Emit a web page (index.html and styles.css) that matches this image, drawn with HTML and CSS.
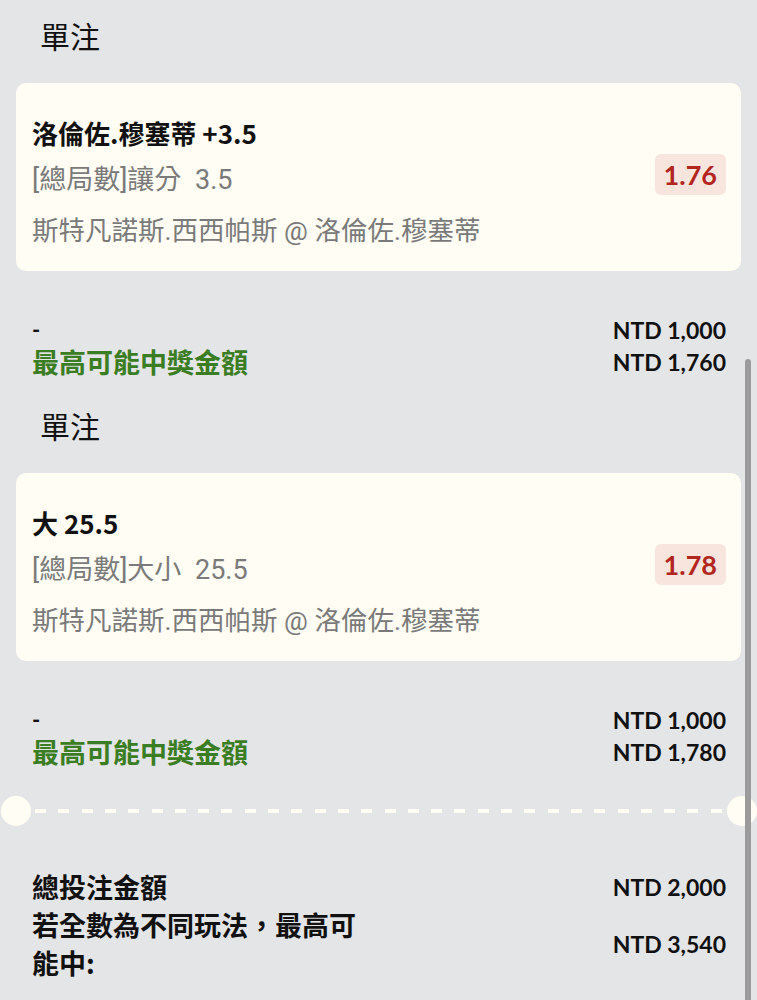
FILE: index.html
```html
<!DOCTYPE html>
<html lang="zh-Hant">
<head>
<meta charset="utf-8">
<title>單注</title>
<link rel="stylesheet" href="styles.css">
</head>
<body>
<div class="page">
  <section class="bet">
    <h2 class="bet-title">單注</h2>
    <div class="card">
      <div class="card-info">
        <div class="pick">洛倫佐.穆塞蒂 +3.5</div>
        <div class="market">[總局數]讓分 3.5</div>
        <div class="match">斯特凡諾斯.西西帕斯 @ 洛倫佐.穆塞蒂</div>
      </div>
      <div class="odds">1.76</div>
    </div>
    <div class="amounts">
      <div class="amount-labels">
        <div class="dash">-</div>
        <div class="win-label">最高可能中獎金額</div>
      </div>
      <div class="amount-values">
        <div>NTD 1,000</div>
        <div>NTD 1,760</div>
      </div>
    </div>
  </section>

  <section class="bet">
    <h2 class="bet-title">單注</h2>
    <div class="card">
      <div class="card-info">
        <div class="pick">大 25.5</div>
        <div class="market">[總局數]大小 25.5</div>
        <div class="match">斯特凡諾斯.西西帕斯 @ 洛倫佐.穆塞蒂</div>
      </div>
      <div class="odds">1.78</div>
    </div>
    <div class="amounts">
      <div class="amount-labels">
        <div class="dash">-</div>
        <div class="win-label">最高可能中獎金額</div>
      </div>
      <div class="amount-values">
        <div>NTD 1,000</div>
        <div>NTD 1,780</div>
      </div>
    </div>
  </section>
</div>

<div class="separator">
  <span class="notch"></span>
  <span class="dashed"></span>
  <span class="notch"></span>
</div>

<div class="summary">
  <div class="summary-row">
    <div class="summary-label">總投注金額</div>
    <div class="summary-value">NTD 2,000</div>
  </div>
  <div class="summary-row">
    <div class="summary-label">若全數為不同玩法，最高可能中:</div>
    <div class="summary-value">NTD 3,540</div>
  </div>
</div>

<div class="scrollbar"></div>
</body>
</html>
```

FILE: styles.css
```css
* { box-sizing: border-box; }

html, body {
  margin: 0;
  padding: 0;
}

body {
  background: #e4e5e7;
  font-family: "Noto Sans CJK TC", "Noto Sans", sans-serif;
  color: #111;
  overflow: hidden;
}

.page {
  padding: 15px 16px 0;
}

.bet + .bet {
  margin-top: 27px;
}

.bet-title {
  margin: 0 0 28px;
  padding-left: 24px;
  font-size: 30px;
  font-weight: 400;
  line-height: 40px;
  height: 40px;
  color: #111;
}

.card {
  display: flex;
  align-items: center;
  justify-content: space-between;
  height: 188px;
  padding: 27px 15px 16px 16px;
  background: #fffdf4;
  border-radius: 10px;
}

.card-info {
  display: flex;
  flex-direction: column;
}

.pick {
  font-size: 26px;
  font-weight: 700;
  line-height: 46px;
  color: #111;
}

.market {
  font-family: Roboto, "Noto Sans CJK TC", sans-serif;
  font-size: 27px;
  line-height: 48px;
  word-spacing: 7px;
  color: #7a7a7a;
}

.match {
  margin-top: 3px;
  font-family: Roboto, "Noto Sans CJK TC", sans-serif;
  font-size: 26.5px;
  line-height: 48px;
  color: #7a7a7a;
}

.odds {
  margin-top: -17px;
  padding: 0 9px;
  height: 41px;
  line-height: 41px;
  border-radius: 6px;
  background: #f8e5de;
  color: #b3261e;
  font-family: Lato, "Noto Sans", sans-serif;
  font-weight: 700;
  font-size: 27px;
}

.amounts {
  display: flex;
  justify-content: space-between;
  align-items: flex-start;
  margin-top: 43px;
  padding: 0 15px 0 16px;
}

.amount-labels {
  display: flex;
  flex-direction: column;
}

.dash {
  font-family: Lato, "Noto Sans", sans-serif;
  font-weight: 700;
  font-size: 22px;
  line-height: 32px;
}

.win-label {
  font-size: 27px;
  font-weight: 700;
  line-height: 32px;
  color: #3b7d23;
}

.amount-values {
  display: flex;
  flex-direction: column;
  align-items: flex-end;
  font-family: Lato, "Noto Sans", sans-serif;
  font-weight: 700;
  font-size: 23px;
  line-height: 32px;
  color: #111;
}

.separator {
  display: flex;
  align-items: center;
  margin-top: 28px;
  height: 30px;
}

.notch {
  flex: none;
  width: 30px;
  height: 30px;
  border-radius: 50%;
  background: #fffdf4;
}

.separator .notch:first-child { margin-left: 1px; }

.dashed {
  flex: 1;
  height: 4px;
  margin: 0 4px 0 4px;
  background: repeating-linear-gradient(to right, #fffdf4 0 11px, transparent 11px 23.3px);
}

.summary {
  margin-top: 42px;
  padding: 0 31px 0 32px;
}

.summary-row {
  display: flex;
  justify-content: space-between;
  align-items: center;
}

.summary-label {
  width: 340px;
  font-size: 27px;
  font-weight: 700;
  line-height: 38px;
  color: #111;
}

.summary-value {
  font-family: Lato, "Noto Sans", sans-serif;
  font-weight: 700;
  font-size: 23px;
  line-height: 38px;
  color: #111;
}

.scrollbar {
  position: fixed;
  left: 745px;
  top: 359px;
  width: 6px;
  height: 700px;
  border-radius: 3px;
  background: #9b9b9b;
}
```
